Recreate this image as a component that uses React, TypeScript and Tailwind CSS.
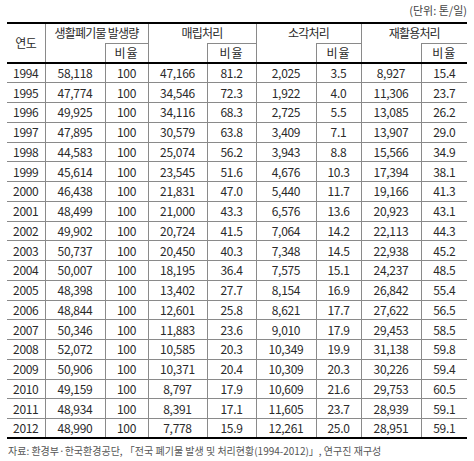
const rows: string[][] = [
    ["1994", "58,118", "100", "47,166", "81.2", "2,025", "3.5", "8,927", "15.4"],
    ["1995", "47,774", "100", "34,546", "72.3", "1,922", "4.0", "11,306", "23.7"],
    ["1996", "49,925", "100", "34,116", "68.3", "2,725", "5.5", "13,085", "26.2"],
    ["1997", "47,895", "100", "30,579", "63.8", "3,409", "7.1", "13,907", "29.0"],
    ["1998", "44,583", "100", "25,074", "56.2", "3,943", "8.8", "15,566", "34.9"],
    ["1999", "45,614", "100", "23,545", "51.6", "4,676", "10.3", "17,394", "38.1"],
    ["2000", "46,438", "100", "21,831", "47.0", "5,440", "11.7", "19,166", "41.3"],
    ["2001", "48,499", "100", "21,000", "43.3", "6,576", "13.6", "20,923", "43.1"],
    ["2002", "49,902", "100", "20,724", "41.5", "7,064", "14.2", "22,113", "44.3"],
    ["2003", "50,737", "100", "20,450", "40.3", "7,348", "14.5", "22,938", "45.2"],
    ["2004", "50,007", "100", "18,195", "36.4", "7,575", "15.1", "24,237", "48.5"],
    ["2005", "48,398", "100", "13,402", "27.7", "8,154", "16.9", "26,842", "55.4"],
    ["2006", "48,844", "100", "12,601", "25.8", "8,621", "17.7", "27,622", "56.5"],
    ["2007", "50,346", "100", "11,883", "23.6", "9,010", "17.9", "29,453", "58.5"],
    ["2008", "52,072", "100", "10,585", "20.3", "10,349", "19.9", "31,138", "59.8"],
    ["2009", "50,906", "100", "10,371", "20.4", "10,309", "20.3", "30,226", "59.4"],
    ["2010", "49,159", "100", "8,797", "17.9", "10,609", "21.6", "29,753", "60.5"],
    ["2011", "48,934", "100", "8,391", "17.1", "11,605", "23.7", "28,939", "59.1"],
    ["2012", "48,990", "100", "7,778", "15.9", "12,261", "25.0", "28,951", "59.1"],
];

const colWidths = ["w-[38px]", "w-[60px]", "w-[43px]", "w-[59px]", "w-[49px]", "w-[60px]", "w-[45px]", "w-[60px]", "w-[46px]"];

const groups = ["생활폐기물 발생량", "매립처리", "소각처리", "재활용처리"];

const App = () => {
    return (
        <div className="w-[474px] h-[461px] bg-white text-[#2a2a2a] font-['Noto_Sans_CJK_KR',sans-serif] overflow-hidden">
            <div className="h-[22px] pr-[7px] pt-[2px] text-right text-[11px] leading-[16px] text-[#444]">
                (단위: 톤/일)
            </div>
            <table className="ml-[7px] w-[460px] table-fixed border-collapse">
                <colgroup>
                    {colWidths.map((w, i) => (
                        <col key={i} className={w} />
                    ))}
                </colgroup>
                <thead>
                    <tr className="h-[20px]">
                        <th
                            rowSpan={2}
                            className="border-t-2 border-b-2 border-black p-0 text-[12px] font-normal leading-none tracking-[-0.5px]"
                        >
                            연도
                        </th>
                        {groups.map((g) => (
                            <th
                                key={g}
                                colSpan={2}
                                className="border-t-2 border-t-black border-l border-l-[#8a8a8a] p-0 text-[12px] font-normal leading-none tracking-[-0.8px]"
                            >
                                {g}
                            </th>
                        ))}
                    </tr>
                    <tr className="h-[20px]">
                        {groups.map((g) => [
                            <th
                                key={g + "-a"}
                                className="border-l border-l-[#8a8a8a] border-b-2 border-b-black p-0"
                            />,
                            <th
                                key={g + "-b"}
                                className="border-l border-l-[#8a8a8a] border-t border-t-[#8a8a8a] border-b-2 border-b-black p-0 text-[12px] font-normal leading-none tracking-[1px]"
                            >
                                비율
                            </th>,
                        ])}
                    </tr>
                </thead>
                <tbody>
                    {rows.map((row, ri) => (
                        <tr key={row[0]} className="h-[19.75px]">
                            {row.map((cell, ci) => (
                                <td
                                    key={ci}
                                    className={`p-0 text-center text-[12px] leading-none tracking-[-0.3px] ${
                                        ci > 0 ? "border-l border-l-[#8a8a8a]" : ""
                                    } ${ri > 0 ? "border-t border-t-[#8a8a8a]" : ""} ${
                                        ri === rows.length - 1 ? "border-b-2 border-b-black" : ""
                                    }`}
                                >
                                    {cell}
                                </td>
                            ))}
                        </tr>
                    ))}
                </tbody>
            </table>
            <div className="pl-[8px] pt-[5px] text-[10px] leading-[14px] text-[#555]">
                자료: 환경부·한국환경공단, 「전국 폐기물 발생 및 처리현황(1994-2012)」, 연구진 재구성
            </div>
        </div>
    );
};

export default App;
